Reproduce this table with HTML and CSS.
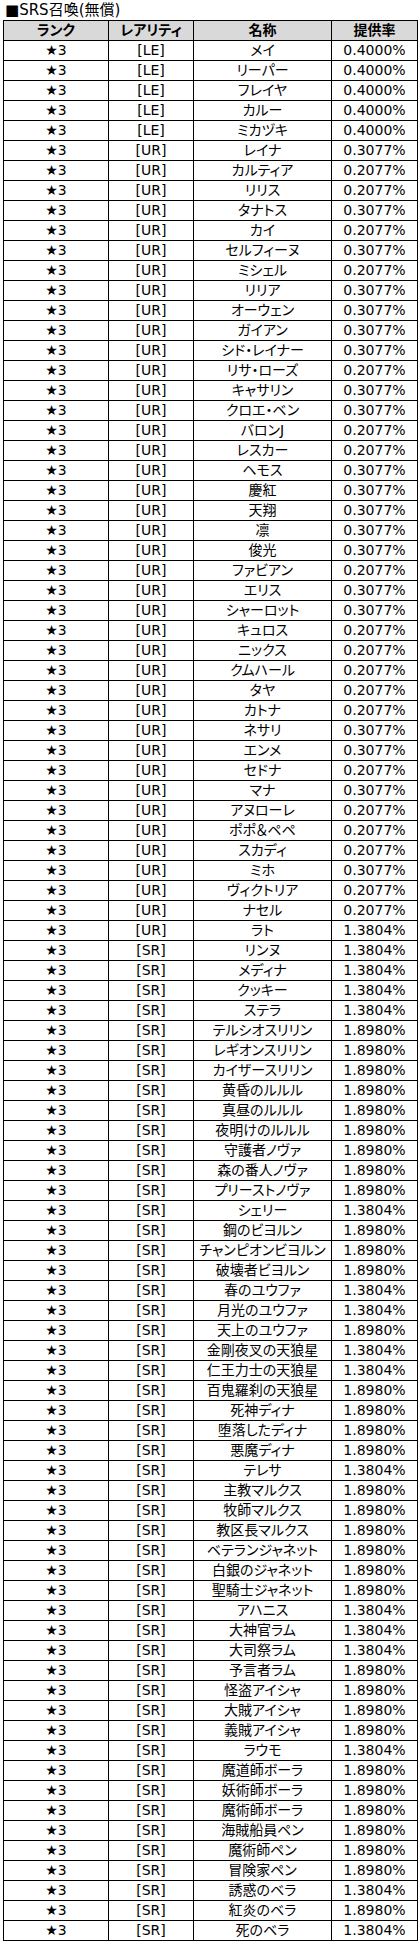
FILE: index.html
```html
<!DOCTYPE html>
<html lang="ja">
<head>
<meta charset="utf-8">
<title>SRS召喚(無償)</title>
<link rel="stylesheet" href="styles.css">
</head>
<body>
<div class="title">■SRS召喚(無償)</div>
<table class="rates">
<colgroup><col class="c-rank"><col class="c-rarity"><col class="c-name"><col class="c-rate"></colgroup>
<thead>
<tr><th>ランク</th><th>レアリティ</th><th>名称</th><th>提供率</th></tr>
</thead>
<tbody>
<tr><td>★3</td><td>[LE]</td><td>メイ</td><td>0.4000%</td></tr>
<tr><td>★3</td><td>[LE]</td><td>リーパー</td><td>0.4000%</td></tr>
<tr><td>★3</td><td>[LE]</td><td>フレイヤ</td><td>0.4000%</td></tr>
<tr><td>★3</td><td>[LE]</td><td>カルー</td><td>0.4000%</td></tr>
<tr><td>★3</td><td>[LE]</td><td>ミカヅキ</td><td>0.4000%</td></tr>
<tr><td>★3</td><td>[UR]</td><td>レイナ</td><td>0.3077%</td></tr>
<tr><td>★3</td><td>[UR]</td><td>カルティア</td><td>0.2077%</td></tr>
<tr><td>★3</td><td>[UR]</td><td>リリス</td><td>0.2077%</td></tr>
<tr><td>★3</td><td>[UR]</td><td>タナトス</td><td>0.3077%</td></tr>
<tr><td>★3</td><td>[UR]</td><td>カイ</td><td>0.2077%</td></tr>
<tr><td>★3</td><td>[UR]</td><td>セルフィーヌ</td><td>0.3077%</td></tr>
<tr><td>★3</td><td>[UR]</td><td>ミシェル</td><td>0.2077%</td></tr>
<tr><td>★3</td><td>[UR]</td><td>リリア</td><td>0.3077%</td></tr>
<tr><td>★3</td><td>[UR]</td><td>オーウェン</td><td>0.3077%</td></tr>
<tr><td>★3</td><td>[UR]</td><td>ガイアン</td><td>0.3077%</td></tr>
<tr><td>★3</td><td>[UR]</td><td>シド・レイナー</td><td>0.3077%</td></tr>
<tr><td>★3</td><td>[UR]</td><td>リサ・ローズ</td><td>0.2077%</td></tr>
<tr><td>★3</td><td>[UR]</td><td>キャサリン</td><td>0.3077%</td></tr>
<tr><td>★3</td><td>[UR]</td><td>クロエ・ベン</td><td>0.3077%</td></tr>
<tr><td>★3</td><td>[UR]</td><td>バロンJ</td><td>0.2077%</td></tr>
<tr><td>★3</td><td>[UR]</td><td>レスカー</td><td>0.2077%</td></tr>
<tr><td>★3</td><td>[UR]</td><td>ヘモス</td><td>0.3077%</td></tr>
<tr><td>★3</td><td>[UR]</td><td>慶紅</td><td>0.3077%</td></tr>
<tr><td>★3</td><td>[UR]</td><td>天翔</td><td>0.3077%</td></tr>
<tr><td>★3</td><td>[UR]</td><td>凛</td><td>0.3077%</td></tr>
<tr><td>★3</td><td>[UR]</td><td>俊光</td><td>0.3077%</td></tr>
<tr><td>★3</td><td>[UR]</td><td>ファビアン</td><td>0.2077%</td></tr>
<tr><td>★3</td><td>[UR]</td><td>エリス</td><td>0.3077%</td></tr>
<tr><td>★3</td><td>[UR]</td><td>シャーロット</td><td>0.3077%</td></tr>
<tr><td>★3</td><td>[UR]</td><td>キュロス</td><td>0.2077%</td></tr>
<tr><td>★3</td><td>[UR]</td><td>ニックス</td><td>0.2077%</td></tr>
<tr><td>★3</td><td>[UR]</td><td>クムハール</td><td>0.2077%</td></tr>
<tr><td>★3</td><td>[UR]</td><td>タヤ</td><td>0.2077%</td></tr>
<tr><td>★3</td><td>[UR]</td><td>カトナ</td><td>0.2077%</td></tr>
<tr><td>★3</td><td>[UR]</td><td>ネサリ</td><td>0.3077%</td></tr>
<tr><td>★3</td><td>[UR]</td><td>エンメ</td><td>0.3077%</td></tr>
<tr><td>★3</td><td>[UR]</td><td>セドナ</td><td>0.2077%</td></tr>
<tr><td>★3</td><td>[UR]</td><td>マナ</td><td>0.3077%</td></tr>
<tr><td>★3</td><td>[UR]</td><td>アヌローレ</td><td>0.2077%</td></tr>
<tr><td>★3</td><td>[UR]</td><td>ポポ＆ペペ</td><td>0.2077%</td></tr>
<tr><td>★3</td><td>[UR]</td><td>スカディ</td><td>0.2077%</td></tr>
<tr><td>★3</td><td>[UR]</td><td>ミホ</td><td>0.3077%</td></tr>
<tr><td>★3</td><td>[UR]</td><td>ヴィクトリア</td><td>0.2077%</td></tr>
<tr><td>★3</td><td>[UR]</td><td>ナセル</td><td>0.2077%</td></tr>
<tr><td>★3</td><td>[UR]</td><td>ラト</td><td>1.3804%</td></tr>
<tr><td>★3</td><td>[SR]</td><td>リンヌ</td><td>1.3804%</td></tr>
<tr><td>★3</td><td>[SR]</td><td>メディナ</td><td>1.3804%</td></tr>
<tr><td>★3</td><td>[SR]</td><td>クッキー</td><td>1.3804%</td></tr>
<tr><td>★3</td><td>[SR]</td><td>ステラ</td><td>1.3804%</td></tr>
<tr><td>★3</td><td>[SR]</td><td>テルシオスリリン</td><td>1.8980%</td></tr>
<tr><td>★3</td><td>[SR]</td><td>レギオンスリリン</td><td>1.8980%</td></tr>
<tr><td>★3</td><td>[SR]</td><td>カイザースリリン</td><td>1.8980%</td></tr>
<tr><td>★3</td><td>[SR]</td><td>黄昏のルルル</td><td>1.8980%</td></tr>
<tr><td>★3</td><td>[SR]</td><td>真昼のルルル</td><td>1.8980%</td></tr>
<tr><td>★3</td><td>[SR]</td><td>夜明けのルルル</td><td>1.8980%</td></tr>
<tr><td>★3</td><td>[SR]</td><td>守護者ノヴァ</td><td>1.8980%</td></tr>
<tr><td>★3</td><td>[SR]</td><td>森の番人ノヴァ</td><td>1.8980%</td></tr>
<tr><td>★3</td><td>[SR]</td><td>プリーストノヴァ</td><td>1.8980%</td></tr>
<tr><td>★3</td><td>[SR]</td><td>シェリー</td><td>1.3804%</td></tr>
<tr><td>★3</td><td>[SR]</td><td>鋼のビヨルン</td><td>1.8980%</td></tr>
<tr><td>★3</td><td>[SR]</td><td>チャンピオンビヨルン</td><td>1.8980%</td></tr>
<tr><td>★3</td><td>[SR]</td><td>破壊者ビヨルン</td><td>1.8980%</td></tr>
<tr><td>★3</td><td>[SR]</td><td>春のユウファ</td><td>1.3804%</td></tr>
<tr><td>★3</td><td>[SR]</td><td>月光のユウファ</td><td>1.3804%</td></tr>
<tr><td>★3</td><td>[SR]</td><td>天上のユウファ</td><td>1.8980%</td></tr>
<tr><td>★3</td><td>[SR]</td><td>金剛夜叉の天狼星</td><td>1.3804%</td></tr>
<tr><td>★3</td><td>[SR]</td><td>仁王力士の天狼星</td><td>1.3804%</td></tr>
<tr><td>★3</td><td>[SR]</td><td>百鬼羅刹の天狼星</td><td>1.8980%</td></tr>
<tr><td>★3</td><td>[SR]</td><td>死神ディナ</td><td>1.8980%</td></tr>
<tr><td>★3</td><td>[SR]</td><td>堕落したディナ</td><td>1.8980%</td></tr>
<tr><td>★3</td><td>[SR]</td><td>悪魔ディナ</td><td>1.8980%</td></tr>
<tr><td>★3</td><td>[SR]</td><td>テレサ</td><td>1.3804%</td></tr>
<tr><td>★3</td><td>[SR]</td><td>主教マルクス</td><td>1.8980%</td></tr>
<tr><td>★3</td><td>[SR]</td><td>牧師マルクス</td><td>1.8980%</td></tr>
<tr><td>★3</td><td>[SR]</td><td>教区長マルクス</td><td>1.8980%</td></tr>
<tr><td>★3</td><td>[SR]</td><td>ベテランジャネット</td><td>1.8980%</td></tr>
<tr><td>★3</td><td>[SR]</td><td>白銀のジャネット</td><td>1.8980%</td></tr>
<tr><td>★3</td><td>[SR]</td><td>聖騎士ジャネット</td><td>1.8980%</td></tr>
<tr><td>★3</td><td>[SR]</td><td>アハニス</td><td>1.3804%</td></tr>
<tr><td>★3</td><td>[SR]</td><td>大神官ラム</td><td>1.3804%</td></tr>
<tr><td>★3</td><td>[SR]</td><td>大司祭ラム</td><td>1.3804%</td></tr>
<tr><td>★3</td><td>[SR]</td><td>予言者ラム</td><td>1.8980%</td></tr>
<tr><td>★3</td><td>[SR]</td><td>怪盗アイシャ</td><td>1.8980%</td></tr>
<tr><td>★3</td><td>[SR]</td><td>大賊アイシャ</td><td>1.8980%</td></tr>
<tr><td>★3</td><td>[SR]</td><td>義賊アイシャ</td><td>1.8980%</td></tr>
<tr><td>★3</td><td>[SR]</td><td>ラウモ</td><td>1.3804%</td></tr>
<tr><td>★3</td><td>[SR]</td><td>魔道師ボーラ</td><td>1.8980%</td></tr>
<tr><td>★3</td><td>[SR]</td><td>妖術師ボーラ</td><td>1.8980%</td></tr>
<tr><td>★3</td><td>[SR]</td><td>魔術師ボーラ</td><td>1.8980%</td></tr>
<tr><td>★3</td><td>[SR]</td><td>海賊船員ペン</td><td>1.8980%</td></tr>
<tr><td>★3</td><td>[SR]</td><td>魔術師ペン</td><td>1.8980%</td></tr>
<tr><td>★3</td><td>[SR]</td><td>冒険家ペン</td><td>1.8980%</td></tr>
<tr><td>★3</td><td>[SR]</td><td>誘惑のベラ</td><td>1.3804%</td></tr>
<tr><td>★3</td><td>[SR]</td><td>紅炎のベラ</td><td>1.8980%</td></tr>
<tr><td>★3</td><td>[SR]</td><td>死のベラ</td><td>1.3804%</td></tr>
</tbody>
</table>
</body>
</html>
```
FILE: styles.css
```css
html, body {
  margin: 0;
  padding: 0;
  background: #fff;
}

body {
  font-family: "DejaVu Sans", "Noto Sans CJK JP", sans-serif;
  font-size: 14px;
  color: #000;
  font-feature-settings: "palt";
}

.title {
  height: 20px;
  line-height: 20px;
  padding-left: 5px;
  font-size: 15px;
  white-space: nowrap;
}

.rates {
  margin-left: 3px;
  border-collapse: collapse;
  table-layout: fixed;
  width: 414px;
}

.c-rank { width: 105px; }
.c-rarity { width: 85px; }
.c-name { width: 138px; }
.c-rate { width: 86px; }

.rates th,
.rates td {
  border: 1px solid #000;
  padding: 0;
  height: 19px;
  line-height: 19px;
  text-align: center;
  vertical-align: middle;
  white-space: nowrap;
  overflow: hidden;
}

.rates th {
  background: #d9d9d9;
  font-weight: 700;
}
```
